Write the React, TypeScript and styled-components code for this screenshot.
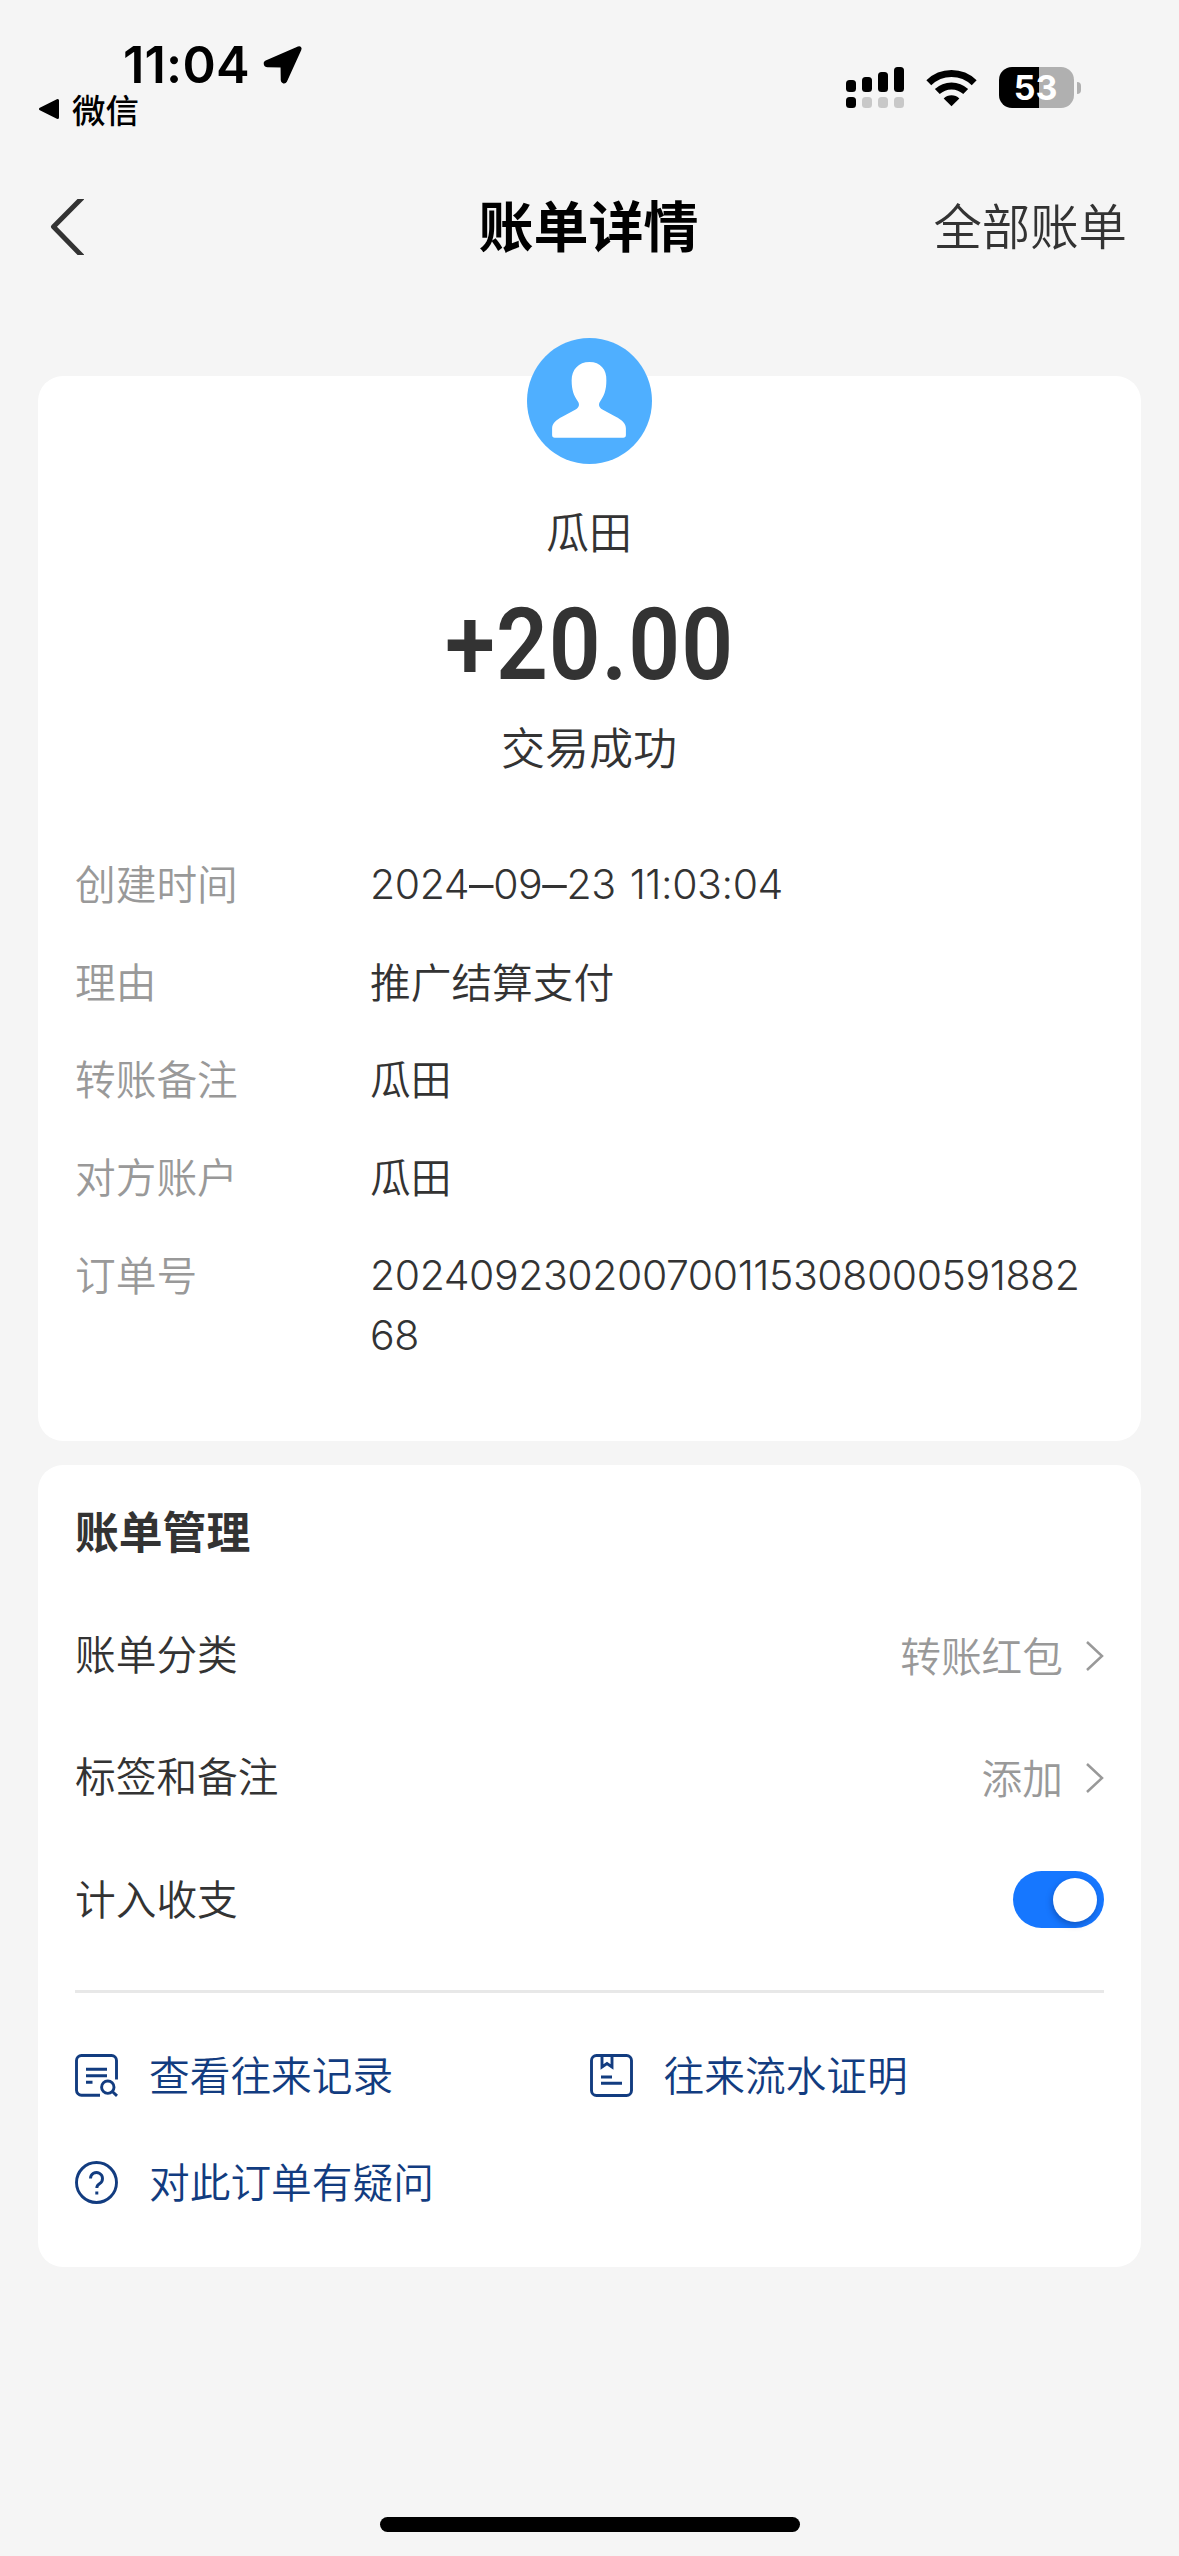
import React from "react";
import styled, { createGlobalStyle } from "styled-components";

const cjk = `"Noto Sans CJK SC", "PingFang SC", sans-serif`;
const latin = `Inter, "Noto Sans CJK SC", sans-serif`;
const ink = "#333333";
const muted = "#999999";
const link = "#123c80";

const GlobalStyle = createGlobalStyle`
  * { box-sizing: border-box; }
  html, body { margin: 0; padding: 0; background: #f5f5f5; }
  button { border: 0; padding: 0; background: none; font: inherit; color: inherit; }
  svg { display: block; flex: none; }
`;

const Screen = styled.div`
  width: 1179px;
  height: 2556px;
  overflow: hidden;
  display: flex;
  flex-direction: column;
  background: #f5f5f5;
  color: ${ink};
  font-family: ${cjk};
  font-weight: 350;
`;

const StatusBar = styled.header`
  display: flex;
  justify-content: space-between;
  height: 152px;
  padding: 40px 98px 0 38px;
  color: #000;
`;

const StatusLeft = styled.div`
  display: flex;
  flex-direction: column;
`;

const Clock = styled.div`
  display: flex;
  align-items: center;
  gap: 13px;
  height: 50px;
  padding-left: 85px;
  font-family: ${latin};
  font-size: 50.5px;
  font-weight: 600;
  line-height: 50px;
  letter-spacing: 0.2px;
`;

const ReturnApp = styled.button`
  display: flex;
  align-items: center;
  gap: 12px;
  height: 38px;
  font-size: 33.5px;
  font-weight: 500;
  line-height: 38px;
`;

const StatusRight = styled.div`
  display: flex;
  align-items: flex-start;
  padding-top: 27px;
`;

const Signal = styled.div`
  display: grid;
  grid-template-columns: repeat(4, 10px);
  grid-template-rows: 25px 11px;
  align-items: end;
  gap: 5px 6px;
  margin-right: 22px;
`;

const Bar = styled.span<{ $h: number; $dim?: boolean }>`
  height: ${(p) => p.$h}px;
  border-radius: 3.5px;
  background: ${(p) => (p.$dim ? "#c8c8c8" : "#000")};
`;

const WifiSlot = styled.div`
  padding-top: 2px;
  margin-right: 22px;
`;

const Battery = styled.div`
  display: flex;
  align-items: center;
  gap: 3px;
`;

const BatteryBody = styled.div`
  width: 75px;
  height: 41px;
  padding-right: 2px;
  border-radius: 13px;
  background: linear-gradient(to right, #000 40px, #b0b0b0 40px);
  color: #fff;
  font-family: ${latin};
  font-size: 34px;
  font-weight: 700;
  line-height: 41px;
  text-align: center;
`;

const BatteryTip = styled.span`
  width: 4px;
  height: 12px;
  border-radius: 0 4px 4px 0;
  background: #b0b0b0;
`;

const NavBar = styled.nav`
  display: grid;
  grid-template-columns: 1fr auto 1fr;
  align-items: center;
  height: 150px;
  padding: 0 52px 0 50px;
`;

const BackButton = styled.button`
  justify-self: start;
`;

const Title = styled.h1`
  margin: 0;
  padding-bottom: 8px;
  color: #000;
  font-size: 55px;
  font-weight: 700;
  line-height: 70px;
`;

const AllBills = styled.button`
  justify-self: end;
  padding-bottom: 7px;
  font-size: 48.4px;
  line-height: 70px;
`;

const Card = styled.section<{ $height: number; $top?: number }>`
  display: flex;
  flex-direction: column;
  height: ${(p) => p.$height}px;
  margin: ${(p) => p.$top ?? 0}px 38px 24px;
  padding: 0 37px;
  border-radius: 25px;
  background: #fff;
`;

const Summary = styled.div`
  display: flex;
  flex-direction: column;
  align-items: center;
  margin-top: -38px;
`;

const Avatar = styled.div`
  width: 125px;
  height: 126px;
  border-radius: 50%;
  overflow: hidden;
`;

const Payee = styled.div`
  margin-top: 36px;
  padding-right: 1px;
  font-size: 43px;
  line-height: 60px;
`;

const Amount = styled.div`
  margin-top: 25px;
  font-family: Roboto, sans-serif;
  font-size: 101px;
  font-weight: 600;
  line-height: 120px;
  letter-spacing: 1px;
  transform: scaleX(0.9);
`;

const Result = styled.div`
  margin-top: 11px;
  padding-right: 1px;
  font-size: 44px;
  line-height: 60px;
`;

const Details = styled.dl`
  display: grid;
  grid-template-columns: 295px 1fr;
  row-gap: 37.7px;
  margin: 77px 0 0;
  font-size: 40.7px;
  line-height: 60px;
`;

const Term = styled.dt`
  color: ${muted};
`;

const Value = styled.dd`
  margin: 0;
`;

const NumericValue = styled(Value)`
  margin: 1px 0 -1px;
  padding-right: 12px;
  font-family: ${latin};
  font-size: 41px;
  letter-spacing: -0.43px;
  word-spacing: 3px;
  overflow-wrap: anywhere;
`;

const Dash = styled.span`
  font-size: 49px;
  line-height: 0;
  vertical-align: -3px;
`;

const SectionTitle = styled.h2`
  margin: 35px 0 0;
  font-size: 43.8px;
  font-weight: 700;
  line-height: 60px;
`;

const SettingList = styled.div`
  display: flex;
  flex-direction: column;
  padding: 32px 0 31px;
  border-bottom: 3px solid #e8e8e8;
`;

const Setting = styled.div`
  display: flex;
  align-items: center;
  justify-content: space-between;
  height: 122.3px;
  font-size: 40.7px;
  line-height: 60px;
`;

const SettingValue = styled.span`
  display: flex;
  align-items: center;
  gap: 22px;
  padding-top: 3px;
  color: ${muted};

  svg {
    margin-top: 3px;
  }
`;

const Switch = styled.button`
  display: flex;
  justify-content: flex-end;
  width: 91px;
  height: 57px;
  margin-top: 3px;
  padding: 7px;
  border-radius: 29px;
  background: #1677ff;
`;

const Knob = styled.span`
  width: 44px;
  height: 44px;
  border-radius: 50%;
  background: #fff;
  box-shadow: -1px 3px 6px rgba(0, 30, 90, 0.35);
`;

const Links = styled.div`
  display: grid;
  grid-template-columns: 1fr 1fr;
  row-gap: 47px;
  padding-top: 51px;
`;

const LinkItem = styled.button`
  display: flex;
  align-items: center;
  gap: 31px;
  height: 60px;
  color: ${link};
  font-size: 40.7px;
  line-height: 60px;

  svg {
    margin-top: 4px;
  }
`;

const HomeIndicator = styled.div`
  width: 420px;
  height: 15px;
  margin: auto auto 24px 380px;
  border-radius: 8px;
  background: #000;
`;

const LocationArrow = () => (
  <svg width="40" height="40" viewBox="0 0 40 40">
    <path
      d="M3 16.2 35.2 2.2c1.9-.7 3.2.5 2.4 2.4L23.2 36.4c-1.1 2.2-4.600 1.700-4.700-1.200L18.300 21.700 4.500 21.400c-3.300-.1-4-4-1.500-5.200Z"
      stroke="#000"
      strokeWidth="1.500"
    />
  </svg>
);

const ReturnTriangle = () => (
  <svg width="22" height="22" viewBox="0 0 22 22">
    <path d="M2.500 11 19.500 2.500v17Z" stroke="#000" strokeWidth="3" strokeLinejoin="round" />
  </svg>
);

const Wifi = () => (
  <svg width="51" height="38" viewBox="0 0 51 38" fill="none" stroke="#000" strokeWidth="7">
    <path d="M2.800 13.800a32.500 32.500 0 0 1 45.400 0" />
    <path d="M11.300 22.600a20.500 20.500 0 0 1 28.400 0" />
    <path d="M17.700 29.400a11 11 0 0 1 15.600 0L25.500 37.300Z" fill="#000" stroke="none" />
  </svg>
);

const BackIcon = () => (
  <svg width="34" height="56" viewBox="0 0 34 56" fill="none">
    <path d="M32.500-1.500 3.500 27.800 32.500 57.500" stroke={ink} strokeWidth="5" strokeLinejoin="round" />
  </svg>
);

const Chevron = () => (
  <svg width="19" height="30" viewBox="0 0 19 30" fill="none">
    <path d="m2 1 15 14L2 29" stroke={muted} strokeWidth="2.500" />
  </svg>
);

const PersonIcon = () => (
  <svg width="125" height="126" viewBox="0 0 126 126" preserveAspectRatio="none">
    <rect width="126" height="126" fill="#4fafff" />
    <path
      d="M63 24c-11 0-18 7.500-18 18.500 0 10 2.500 15.500 6 20.500 2.500 3.500 1.500 6.500-2 8.500l-13 7c-7 3.700-10.700 7-10.700 12V97c0 1.800 1 2.700 2.700 2.700h69c1.800 0 2.700-1 2.700-2.700v-6.500c0-5-3.700-8.300-10.700-12l-13-7c-3.500-2-4.500-5-2-8.500 3.500-5 6-10.500 6-20.500C80.500 31.500 74 24 63 24Z"
      fill="#fff"
    />
  </svg>
);

const RecordsIcon = () => (
  <svg width="43" height="43" viewBox="0 0 43 43" fill="none" stroke={link} strokeWidth="2.900">
    <path d="M25 41.300H6.500a5 5 0 0 1-5-5V6.500a5 5 0 0 1 5-5h30a5 5 0 0 1 5 5V25.500" />
    <path d="M11 15.300h21M11 21.800h21M11 28.300h6.500" />
    <circle cx="32.800" cy="33.200" r="6.200" />
    <path d="m37.300 37.500 4.700 4.400" />
  </svg>
);

const ProofIcon = () => (
  <svg width="43" height="43" viewBox="0 0 43 43" fill="none" stroke={link} strokeWidth="2.900">
    <rect x="1.500" y="1.500" width="40" height="40" rx="5" />
    <path d="M12 2v11l5-3.500 5 3.500V2" />
    <path d="M11 23h11M11 29.300h21" />
  </svg>
);

const QuestionIcon = () => (
  <svg width="43" height="43" viewBox="0 0 43 43" fill="none" stroke={link} strokeWidth="2.900">
    <circle cx="21.500" cy="21.500" r="20" />
    <path d="M15.500 17.500a6 6 0 1 1 9.300 5c-2 1.300-3 2-3 4.500" />
    <path d="M21.800 30.500v3" strokeWidth="3" />
  </svg>
);

interface Detail {
  term: string;
  value: string;
  numeric?: boolean;
}

const details: Detail[] = [
  { term: "创建时间", value: "2024–09–23 11:03:04", numeric: true },
  { term: "理由", value: "推广结算支付" },
  { term: "转账备注", value: "瓜田" },
  { term: "对方账户", value: "瓜田" },
  { term: "订单号", value: "20240923020070011530800059188268", numeric: true },
];

const withWideDashes = (text: string) =>
  text.split("–").map((part, i) => (
    <React.Fragment key={i}>
      {i > 0 && <Dash>–</Dash>}
      {part}
    </React.Fragment>
  ));

export default function App() {
  return (
    <>
      <GlobalStyle />
      <Screen lang="zh-CN">
        <StatusBar>
          <StatusLeft>
            <Clock>
              11:04
              <LocationArrow />
            </Clock>
            <ReturnApp>
              <ReturnTriangle />
              微信
            </ReturnApp>
          </StatusLeft>
          <StatusRight>
            <Signal>
              <Bar $h={12} />
              <Bar $h={15} />
              <Bar $h={20} />
              <Bar $h={25} />
              <Bar $h={11} />
              <Bar $h={11} $dim />
              <Bar $h={11} $dim />
              <Bar $h={11} $dim />
            </Signal>
            <WifiSlot>
              <Wifi />
            </WifiSlot>
            <Battery>
              <BatteryBody>53</BatteryBody>
              <BatteryTip />
            </Battery>
          </StatusRight>
        </StatusBar>

        <NavBar>
          <BackButton aria-label="返回">
            <BackIcon />
          </BackButton>
          <Title>账单详情</Title>
          <AllBills>全部账单</AllBills>
        </NavBar>

        <Card $height={1065} $top={74}>
          <Summary>
            <Avatar>
              <PersonIcon />
            </Avatar>
            <Payee>瓜田</Payee>
            <Amount>+20.00</Amount>
            <Result>交易成功</Result>
          </Summary>
          <Details>
            {details.map((d) => (
              <React.Fragment key={d.term}>
                <Term>{d.term}</Term>
                {d.numeric ? (
                  <NumericValue>{withWideDashes(d.value)}</NumericValue>
                ) : (
                  <Value>{d.value}</Value>
                )}
              </React.Fragment>
            ))}
          </Details>
        </Card>

        <Card $height={802}>
          <SectionTitle>账单管理</SectionTitle>
          <SettingList>
            <Setting>
              账单分类
              <SettingValue>
                转账红包
                <Chevron />
              </SettingValue>
            </Setting>
            <Setting>
              标签和备注
              <SettingValue>
                添加
                <Chevron />
              </SettingValue>
            </Setting>
            <Setting>
              计入收支
              <Switch role="switch" aria-checked="true">
                <Knob />
              </Switch>
            </Setting>
          </SettingList>
          <Links>
            <LinkItem>
              <RecordsIcon />
              查看往来记录
            </LinkItem>
            <LinkItem>
              <ProofIcon />
              往来流水证明
            </LinkItem>
            <LinkItem>
              <QuestionIcon />
              对此订单有疑问
            </LinkItem>
          </Links>
        </Card>
        <HomeIndicator />
      </Screen>
    </>
  );
}
